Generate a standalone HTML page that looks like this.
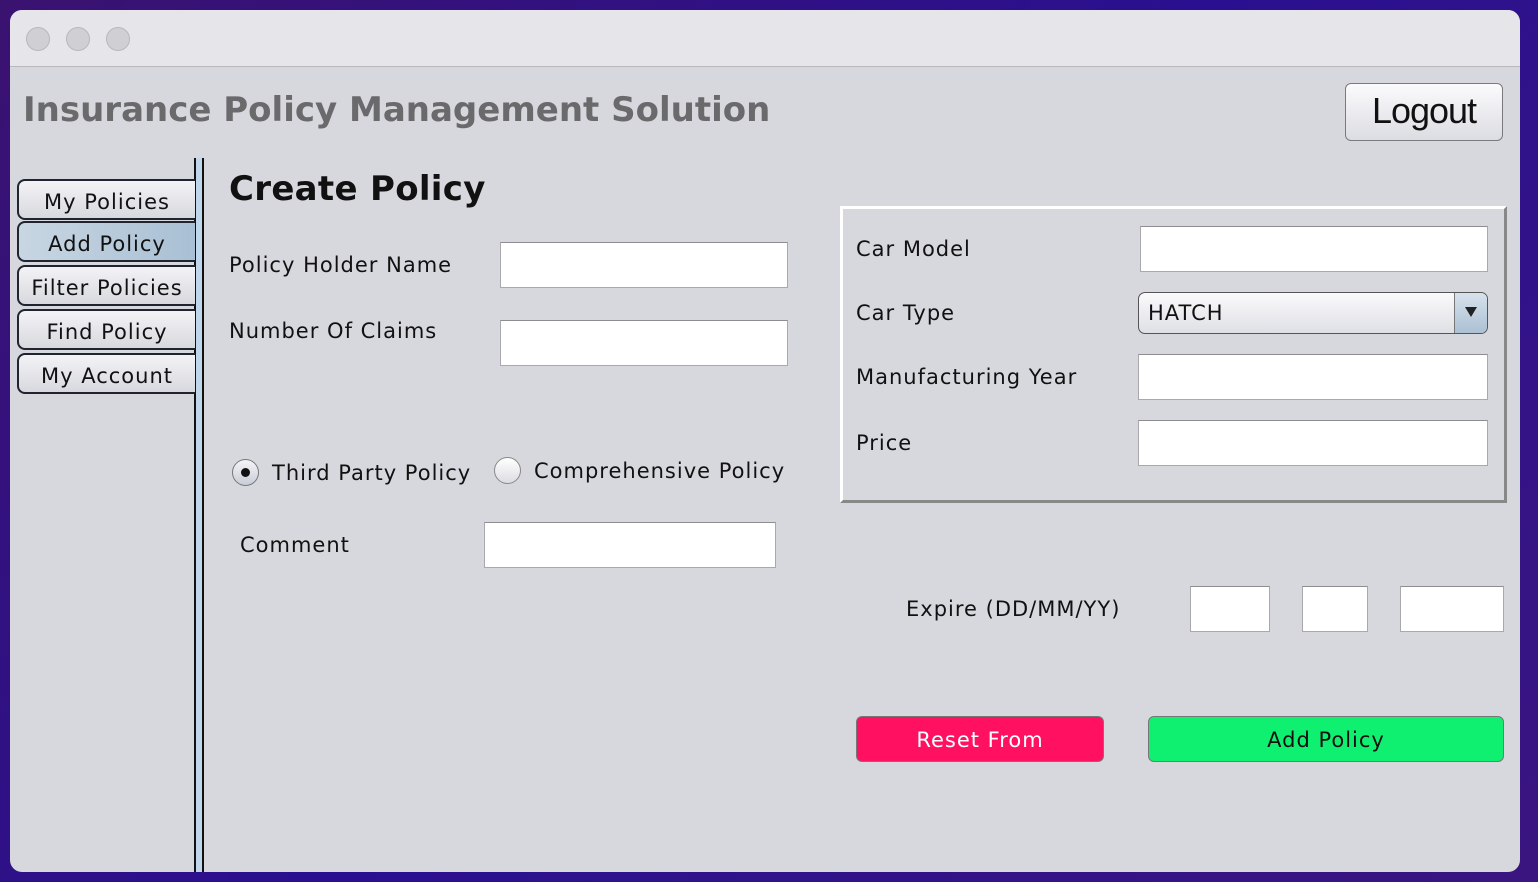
<!DOCTYPE html>
<html><head><style>
*{box-sizing:border-box;margin:0;padding:0}
body{width:1538px;height:882px;overflow:hidden;background:linear-gradient(135deg,#3a1270,#2a1090 50%,#3a1580);font-family:"DejaVu Sans","Liberation Sans",sans-serif;color:#111;position:relative}
.win{position:absolute;left:10px;top:10px;width:1510px;height:862px;background:#d6d8dd;border-radius:12px;overflow:hidden}
.tb{position:absolute;left:0;top:0;width:100%;height:57px;background:#e6e5ea;border-bottom:1px solid #b9b9bd}
.dot{position:absolute;top:17px;width:24px;height:24px;border-radius:50%;background:#d0cfd3;border:1px solid #b8b8bc}
.a{position:absolute;white-space:nowrap}
.lbl{font-size:21px;letter-spacing:1px}
.inp{position:absolute;background:#fff;border:1px solid #a9a9ad;border-top-color:#8e8e92}
.tab{position:absolute;left:7px;width:178px;height:41px;border:2px solid #1f2430;border-right:none;border-radius:8px 0 0 8px;background:linear-gradient(#f3f3f6,#d8d9de);font-size:21px;letter-spacing:1px;text-align:center;line-height:42px}
.btn{position:absolute;border-radius:6px;font-size:21px;letter-spacing:1px;text-align:center}
</style></head><body>
<div class="win">
<div class="tb"></div>
<div class="dot" style="left:16px"></div><div class="dot" style="left:56px"></div><div class="dot" style="left:96px"></div>
<div class="a" style="left:13px;top:80px;font-size:34px;font-weight:bold;color:#6a6a6c;letter-spacing:0">Insurance Policy Management Solution</div>
<div class="btn" style="left:1335px;top:73px;width:158px;height:58px;border:1px solid #7a7a7e;background:linear-gradient(#fbfbfd,#dcdde2);font-size:36px;letter-spacing:-1px;line-height:54px;font-family:'Liberation Sans',sans-serif">Logout</div>
<div style="position:absolute;left:184px;top:148px;width:10px;height:714px;background:#c0d6ea;border-left:2px solid #111;border-right:2px solid #111"></div>
<div class="tab" style="top:169px">My Policies</div>
<div class="tab" style="top:211px;background:linear-gradient(90deg,#c8d6e2,#a9c0d4)">Add Policy</div>
<div class="tab" style="top:255px">Filter Policies</div>
<div class="tab" style="top:299px">Find Policy</div>
<div class="tab" style="top:343px">My Account</div>
<div class="a" style="left:219px;top:159px;font-size:34px;font-weight:bold;letter-spacing:0.3px">Create Policy</div>
<div class="a lbl" style="left:219px;top:243px">Policy Holder Name</div>
<div class="inp" style="left:490px;top:232px;width:288px;height:46px"></div>
<div class="a lbl" style="left:219px;top:309px">Number Of Claims</div>
<div class="inp" style="left:490px;top:310px;width:288px;height:46px"></div>
<div style="position:absolute;left:222px;top:449px;width:27px;height:27px;border-radius:50%;border:1px solid #777;background:linear-gradient(#f5f5f8,#c9cdd6)"><div style="position:absolute;left:8px;top:8px;width:9px;height:9px;border-radius:50%;background:#111"></div></div>
<div class="a lbl" style="left:262px;top:451px">Third Party Policy</div>
<div style="position:absolute;left:484px;top:447px;width:27px;height:27px;border-radius:50%;border:1px solid #888;background:linear-gradient(#fff,#dcdde2)"></div>
<div class="a lbl" style="left:524px;top:449px">Comprehensive Policy</div>
<div class="a lbl" style="left:230px;top:523px">Comment</div>
<div class="inp" style="left:474px;top:512px;width:292px;height:46px"></div>
<div style="position:absolute;left:830px;top:196px;width:667px;height:297px;border:3px solid #fff;border-right-color:#888;border-bottom-color:#888"></div>
<div class="a lbl" style="left:846px;top:227px">Car Model</div>
<div class="inp" style="left:1130px;top:216px;width:348px;height:46px"></div>
<div class="a lbl" style="left:846px;top:291px">Car Type</div>
<div style="position:absolute;left:1128px;top:282px;width:350px;height:42px;border:1px solid #555;border-radius:7px;background:linear-gradient(#fafafc,#dfe0e5);overflow:hidden"><span class="a lbl" style="left:9px;top:8px">HATCH</span><div style="position:absolute;right:0;top:0;width:33px;height:42px;background:linear-gradient(#d7e2ec,#a9bfd2);border-left:1px solid #777"><div style="position:absolute;left:10px;top:14px;border-left:6px solid transparent;border-right:6px solid transparent;border-top:10px solid #222"></div></div></div>
<div class="a lbl" style="left:846px;top:355px">Manufacturing Year</div>
<div class="inp" style="left:1128px;top:344px;width:350px;height:46px"></div>
<div class="a lbl" style="left:846px;top:421px">Price</div>
<div class="inp" style="left:1128px;top:410px;width:350px;height:46px"></div>
<div class="a lbl" style="left:896px;top:587px">Expire (DD/MM/YY)</div>
<div class="inp" style="left:1180px;top:576px;width:80px;height:46px"></div>
<div class="inp" style="left:1292px;top:576px;width:66px;height:46px"></div>
<div class="inp" style="left:1390px;top:576px;width:104px;height:46px"></div>
<div class="btn" style="left:846px;top:706px;width:248px;height:46px;background:#ff1060;border:1px solid #777;color:#fff;line-height:46px">Reset From</div>
<div class="btn" style="left:1138px;top:706px;width:356px;height:46px;background:#10f070;border:1px solid #777;line-height:46px">Add Policy</div>
</div>
</body></html>
